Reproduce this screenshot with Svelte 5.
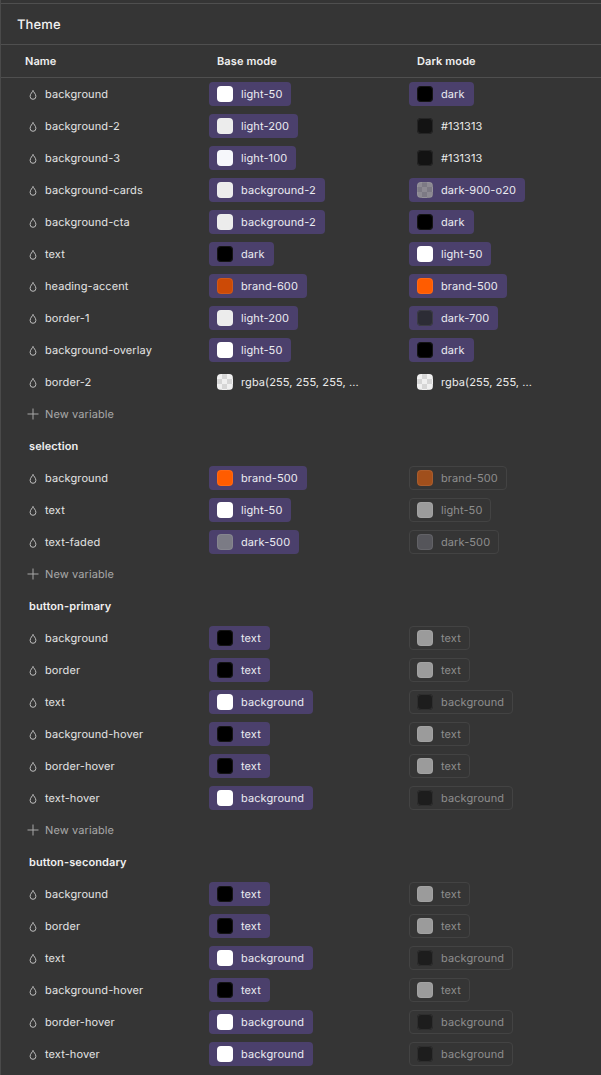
<script>
  const W = '#ffffff';
  const E = '#ececec';
  const L = '#f6f7fb';
  const K = '#000000';
  const CHECK_L = 'check-light';
  const CHECK_D = 'check-dark';
  const ch = (label, color) => ({ label, color, kind: 'alias' });
  const pl = (label, color) => ({ label, color, kind: 'plain' });
  const of = (label, color) => ({ label, color, kind: 'off' });

  const groups = [
    { title: null, rows: [
      ['background', ch('light-50', W), ch('dark', K)],
      ['background-2', ch('light-200', E), pl('#131313', '#131313')],
      ['background-3', ch('light-100', L), pl('#131313', '#131313')],
      ['background-cards', ch('background-2', E), ch('dark-900-o20', CHECK_D)],
      ['background-cta', ch('background-2', E), ch('dark', K)],
      ['text', ch('dark', K), ch('light-50', W)],
      ['heading-accent', ch('brand-600', '#cc4a06'), ch('brand-500', '#ff5c00')],
      ['border-1', ch('light-200', E), ch('dark-700', '#2c2c35')],
      ['background-overlay', ch('light-50', W), ch('dark', K)],
      ['border-2', pl('rgba(255, 255, 255, ...', CHECK_L), pl('rgba(255, 255, ...', CHECK_L)],
    ], add: true },
    { title: 'selection', rows: [
      ['background', ch('brand-500', '#ff5c00'), of('brand-500', '#a04f1c')],
      ['text', ch('light-50', W), of('light-50', '#9b9b9b')],
      ['text-faded', ch('dark-500', '#7b7b85'), of('dark-500', '#55555a')],
    ], add: true },
    { title: 'button-primary', rows: [
      ['background', ch('text', K), of('text', '#9b9b9b')],
      ['border', ch('text', K), of('text', '#9b9b9b')],
      ['text', ch('background', W), of('background', '#1d1d1d')],
      ['background-hover', ch('text', K), of('text', '#9b9b9b')],
      ['border-hover', ch('text', K), of('text', '#9b9b9b')],
      ['text-hover', ch('background', W), of('background', '#1d1d1d')],
    ], add: true },
    { title: 'button-secondary', rows: [
      ['background', ch('text', K), of('text', '#9b9b9b')],
      ['border', ch('text', K), of('text', '#9b9b9b')],
      ['text', ch('background', W), of('background', '#1d1d1d')],
      ['background-hover', ch('text', K), of('text', '#9b9b9b')],
      ['border-hover', ch('background', W), of('background', '#1d1d1d')],
      ['text-hover', ch('background', W), of('background', '#1d1d1d')],
    ], add: false },
  ];
</script>

{#snippet value(v)}
  <div class="cell">
    <span class="chip {v.kind}">
      {#if v.color === CHECK_L}
        <span class="swatch check-l"></span>
      {:else if v.color === CHECK_D}
        <span class="swatch check-d"></span>
      {:else}
        <span class="swatch" style="background:{v.color}"></span>
      {/if}
      <span class="label">{v.label}</span>
    </span>
  </div>
{/snippet}

<div class="panel">
  <header class="title">Theme</header>
  <div class="row head">
    <div class="hname">Name</div>
    <div class="hcol">Base mode</div>
    <div class="hcol">Dark mode</div>
  </div>
  {#each groups as g}
    {#if g.title}
      <div class="row group">{g.title}</div>
    {/if}
    {#each g.rows as r}
      <div class="row">
        <div class="name">
          <svg class="drop" width="12" height="12" viewBox="0 0 12 12" fill="none" stroke="#bdbdbd" stroke-width="1">
            <path d="M6 1.4 C6.4 3 8.9 4.9 8.9 7.4 A2.9 2.9 0 0 1 3.1 7.4 C3.1 4.9 5.6 3 6 1.4 Z" />
          </svg>
          <span>{r[0]}</span>
        </div>
        {@render value(r[1])}
        {@render value(r[2])}
      </div>
    {/each}
    {#if g.add}
      <div class="row add">
        <svg width="12" height="12" viewBox="0 0 12 12" stroke="#a8a8a8" stroke-width="1" fill="none">
          <path d="M6 0.5V11.5M0.5 6H11.5" />
        </svg>
        <span>New variable</span>
      </div>
    {/if}
  {/each}
</div>

<style>
  :global(body) {
    margin: 0;
    background: #353535;
  }
  .panel {
    width: 601px;
    height: 1075px;
    box-sizing: border-box;
    padding-top: 3px;
    overflow: hidden;
    background: #353535;
    color: #ececec;
    font-family: Inter, "Liberation Sans", sans-serif;
    font-size: 11px;
    letter-spacing: 0.1px;
    text-rendering: geometricPrecision;
    -webkit-font-smoothing: antialiased;
    border-left: 1px solid #4a4a4a;
  }
  .title {
    height: 42px;
    box-sizing: border-box;
    border-top: 1px solid #4f4f4f;
    border-bottom: 1px solid #4f4f4f;
    display: flex;
    align-items: center;
    padding: 1px 0 0 16px;
    font-size: 13px;
    font-weight: 500;
    color: #f2f2f2;
  }
  .row {
    height: 32px;
    display: grid;
    grid-template-columns: 208px 200px 1fr;
    align-items: center;
  }
  .head {
    border-bottom: 1px solid #4f4f4f;
    font-weight: 600;
    color: #f0f0f0;
  }
  .hname {
    padding-left: 24px;
  }
  .hcol {
    padding-left: 8px;
  }
  .group {
    display: flex;
    padding-left: 28px;
    font-weight: 600;
    color: #f0f0f0;
  }
  .name {
    display: flex;
    align-items: center;
    gap: 6px;
    padding-left: 26px;
    color: #e4e4e4;
  }
  .drop {
    flex: none;
    margin-top: 1px;
  }
  .add {
    display: flex;
    gap: 6px;
    padding-left: 26px;
    color: #a8a8a8;
  }
  .cell {
    display: flex;
    align-items: center;
  }
  .chip {
    height: 24px;
    box-sizing: border-box;
    display: inline-flex;
    align-items: center;
    gap: 8px;
    padding: 0 8px;
    border-radius: 4px;
    border: 1px solid transparent;
  }
  .chip.alias {
    background: #4b406c;
    color: #ececf2;
  }
  .chip.plain {
    color: #ececec;
  }
  .chip.off {
    border-color: #434343;
    color: #8e8e8e;
  }
  .chip > .swatch {
    margin-left: -1px;
  }
  .swatch {
    width: 16px;
    height: 16px;
    flex: none;
    border-radius: 4px;
    box-sizing: border-box;
  }
  .swatch::after {
    content: "";
    display: block;
    width: 100%;
    height: 100%;
    box-sizing: border-box;
    border-radius: 4px;
    border: 1px solid rgba(255, 255, 255, 0.08);
  }
  .check-l {
    background-color: #f0f0f0;
    background-image: conic-gradient(#d6d6d6 25%, transparent 0 50%, #d6d6d6 0 75%, transparent 0);
    background-size: 10px 10px;
  }
  .check-d {
    background-color: #8c8992;
    background-image: conic-gradient(#7c7984 25%, transparent 0 50%, #7c7984 0 75%, transparent 0);
    background-size: 10px 10px;
  }
  .label {
    white-space: nowrap;
  }
</style>
